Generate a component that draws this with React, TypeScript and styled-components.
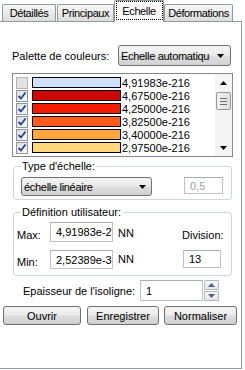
import React from 'react';
import styled, { createGlobalStyle } from 'styled-components';

const GlobalStyle = createGlobalStyle`
  html, body {
    margin: 0;
    padding: 0;
    background: #fff;
  }
  body {
    font-family: "Liberation Sans", Arial, sans-serif;
    font-size: 11px;
    color: #000;
  }
`;

const Window = styled.div`
  width: 245px;
  height: 370px;
  background: #fff;
  overflow: hidden;
`;

const TabStrip = styled.div`
  display: flex;
  align-items: flex-end;
  height: 21px;
  padding-left: 2px;
  position: relative;
  z-index: 1;
`;

const Tab = styled.div<{ $w: number; $active?: boolean; $gap?: number }>`
  box-sizing: border-box;
  width: ${({ $w }) => $w}px;
  height: ${({ $active }) => ($active ? 22 : 17)}px;
  margin-left: ${({ $gap }) => $gap ?? 0}px;
  margin-bottom: ${({ $active }) => ($active ? -1 : 0)}px;
  border: 1px solid #919b9c;
  border-bottom: none;
  border-radius: 2px 2px 0 0;
  background: ${({ $active }) => ($active ? '#fff' : 'linear-gradient(#f7f7f7, #dcdcdc)')};
  display: flex;
  justify-content: center;
  align-items: ${({ $active }) => ($active ? 'flex-start' : 'center')};
  white-space: nowrap;
  letter-spacing: -0.4px;
`;

const FocusLabel = styled.span`
  box-sizing: border-box;
  width: 47px;
  height: 19px;
  border: 1px dotted #000;
  display: flex;
  align-items: center;
  justify-content: center;
`;

const Panel = styled.div`
  box-sizing: border-box;
  width: 242px;
  height: 348px;
  border: 1px solid #919b9c;
  border-left: none;
  background: #fff;
  display: flex;
  flex-direction: column;
`;

const PaletteRow = styled.div`
  display: flex;
  align-items: center;
  height: 21px;
  margin-top: 23px;
  padding-left: 12px;
`;

const Label = styled.span<{ $w?: number }>`
  ${({ $w }) => ($w ? `width: ${$w}px;` : '')}
  white-space: nowrap;
  flex-shrink: 0;
`;

const Combo = styled.div<{ $w: number; $h: number }>`
  box-sizing: border-box;
  width: ${({ $w }) => $w}px;
  height: ${({ $h }) => $h}px;
  display: flex;
  align-items: center;
  border: 1px solid #707070;
  border-radius: 3px;
  background: linear-gradient(#f4f4f4, #ebebeb 48%, #dedede 52%, #d2d2d2);
  padding-left: 2px;
  overflow: hidden;
`;

const ComboText = styled.span`
  flex: 1;
  overflow: hidden;
  white-space: nowrap;
  letter-spacing: -0.3px;
`;

const ComboArrow = styled.span<{ $w: number }>`
  width: ${({ $w }) => $w}px;
  flex-shrink: 0;
  display: flex;
  justify-content: center;
  align-items: center;
`;

const ListBox = styled.div`
  box-sizing: border-box;
  width: 221px;
  height: 84px;
  margin: 7px 0 0 12px;
  border: 1px solid #828790;
  display: flex;
  overflow: hidden;
`;

const Rows = styled.div`
  flex: 1;
  padding: 2px 0 0 3px;
  display: flex;
  flex-direction: column;
  overflow: hidden;
`;

const Row = styled.div`
  height: 13px;
  display: flex;
  align-items: center;
  flex-shrink: 0;
`;

const Check = styled.span<{ $on: boolean }>`
  box-sizing: border-box;
  width: 12px;
  height: 12px;
  border: 1px solid ${({ $on }) => ($on ? '#8c95a6' : '#b4b4b4')};
  background: ${({ $on }) => ($on ? 'linear-gradient(135deg, #dcdcd7, #fafafa)' : '#e3e3e3')};
  display: flex;
  align-items: center;
  justify-content: center;
  flex-shrink: 0;
`;

const Swatch = styled.span<{ $c: string }>`
  box-sizing: border-box;
  width: 89px;
  height: 11px;
  margin-left: 4px;
  border: 1px solid #000;
  background: ${({ $c }) => $c};
  flex-shrink: 0;
`;

const Value = styled.span`
  margin-left: 1px;
  white-space: nowrap;
`;

const ScrollBar = styled.div`
  width: 17px;
  flex-shrink: 0;
  background: #f4f4f4;
  display: flex;
  flex-direction: column;
  align-items: center;
`;

const ScrollArrow = styled.div`
  width: 17px;
  height: 17px;
  display: flex;
  align-items: center;
  justify-content: center;
`;

const Thumb = styled.div`
  box-sizing: border-box;
  width: 15px;
  height: 18px;
  margin-top: 1px;
  border: 1px solid #979797;
  border-radius: 2px;
  background: linear-gradient(90deg, #f2f2f2, #e0e0e0);
  display: flex;
  flex-direction: column;
  align-items: center;
  justify-content: center;
  gap: 2px;
`;

const Grip = styled.span`
  width: 7px;
  height: 1px;
  background: #6f6f6f;
`;

const Spacer = styled.div`
  flex: 1;
`;

const GroupBox = styled.fieldset<{ $top: number; $pl: number; $pt: number; $pb: number }>`
  box-sizing: border-box;
  width: 219px;
  margin: ${({ $top }) => $top}px 0 0 13px;
  padding: ${({ $pt }) => $pt}px 0 ${({ $pb }) => $pb}px ${({ $pl }) => $pl}px;
  border: 1px solid #d0d7e2;
  border-radius: 3px;
  min-width: 0;
`;

const Legend = styled.legend<{ $ml: number }>`
  margin-left: ${({ $ml }) => $ml}px;
  padding: 0 2px 0 1px;
  line-height: 13px;
`;

const ScaleRow = styled.div`
  display: flex;
  align-items: flex-start;
`;

const TextBox = styled.input<{ $w: number; $h: number; $muted?: boolean; $ml?: number }>`
  box-sizing: border-box;
  width: ${({ $w }) => $w}px;
  height: ${({ $h }) => $h}px;
  margin: 0 0 0 ${({ $ml }) => $ml ?? 0}px;
  padding: 0 0 0 5px;
  border: 1px solid #bfc2c7;
  border-top-color: #a8abb0;
  font: inherit;
  color: ${({ $muted }) => ($muted ? '#a0a0a0' : '#000')};
  background: #fff;
  outline: none;
  flex-shrink: 0;
`;

const UserGrid = styled.div`
  display: grid;
  grid-template-columns: 33px 63px 69px 45px;
  grid-template-rows: 20px 19px;
  row-gap: 8px;
`;

const GridLabel = styled.span<{ $pb?: number; $pl?: number }>`
  align-self: end;
  line-height: 13px;
  padding-bottom: ${({ $pb }) => $pb ?? 0}px;
  padding-left: ${({ $pl }) => $pl ?? 0}px;
  white-space: nowrap;
`;

const ThicknessRow = styled.div`
  display: flex;
  align-items: center;
  margin-top: 4px;
  padding-left: 23px;
  height: 21px;
`;

const Spinner = styled.div`
  display: flex;
  flex-direction: column;
  gap: 1px;
  margin-left: 1px;
  height: 21px;
`;

const SpinButton = styled.div`
  box-sizing: border-box;
  width: 15px;
  height: 10px;
  border: 1px solid #b4b8be;
  border-radius: 1px;
  background: linear-gradient(#f7f7f7, #e4e6ea);
  display: flex;
  align-items: center;
  justify-content: center;
`;

const ButtonRow = styled.div`
  display: flex;
  margin-top: 5px;
  padding-left: 3px;
`;

const Button = styled.button<{ $w: number; $gap?: number }>`
  box-sizing: border-box;
  width: ${({ $w }) => $w}px;
  height: 19px;
  margin: 0 0 0 ${({ $gap }) => $gap ?? 0}px;
  padding: 0;
  border: 1px solid #707070;
  border-radius: 3px;
  background: linear-gradient(#f4f4f4, #ebebeb 48%, #dddddd 52%, #cfcfcf);
  font: inherit;
  color: #000;
`;

const DownArrow = ({ color = '#000' }: { color?: string }) => (
  <svg width="7" height="4" viewBox="0 0 7 4">
    <polygon points="0,0 7,0 3.5,4" fill={color} />
  </svg>
);

const UpArrow = ({ color = '#000' }: { color?: string }) => (
  <svg width="7" height="4" viewBox="0 0 7 4">
    <polygon points="0,4 7,4 3.5,0" fill={color} />
  </svg>
);

const CheckMark = () => (
  <svg width="10" height="10" viewBox="0 0 10 10">
    <polyline points="1.5,5 4,7.5 8.5,1.5" fill="none" stroke="#2a3f9c" strokeWidth="1.8" />
  </svg>
);

const levels = [
  { color: '#cfe2fd', value: '4,91983e-216', on: false },
  { color: '#cc0800', value: '4,67500e-216', on: true },
  { color: '#f21d00', value: '4,25000e-216', on: true },
  { color: '#ff5b1c', value: '3,82500e-216', on: true },
  { color: '#ffa73d', value: '3,40000e-216', on: true },
  { color: '#ffd77c', value: '2,97500e-216', on: true },
];

export default function App() {
  return (
    <Window>
      <GlobalStyle />
      <TabStrip>
        <Tab $w={54}>Détaillés</Tab>
        <Tab $w={57} $gap={1}>Principaux</Tab>
        <Tab $w={50} $active>
          <FocusLabel>Echelle</FocusLabel>
        </Tab>
        <Tab $w={69}>Déformations</Tab>
      </TabStrip>

      <Panel>
        <PaletteRow>
          <Label $w={106}>Palette de couleurs:</Label>
          <Combo $w={113} $h={21}>
            <ComboText>Echelle automatique</ComboText>
            <ComboArrow $w={20}>
              <DownArrow />
            </ComboArrow>
          </Combo>
        </PaletteRow>

        <ListBox>
          <Rows>
            {levels.map((l) => (
              <Row key={l.value}>
                <Check $on={l.on}>{l.on && <CheckMark />}</Check>
                <Swatch $c={l.color} />
                <Value>{l.value}</Value>
              </Row>
            ))}
          </Rows>
          <ScrollBar>
            <ScrollArrow>
              <UpArrow />
            </ScrollArrow>
            <Thumb>
              <Grip />
              <Grip />
              <Grip />
            </Thumb>
            <Spacer />
            <ScrollArrow>
              <DownArrow />
            </ScrollArrow>
          </ScrollBar>
        </ListBox>

        <GroupBox $top={3} $pl={7} $pt={4} $pb={3}>
          <Legend $ml={0}>Type d'échelle:</Legend>
          <ScaleRow>
            <Combo $w={131} $h={19}>
              <ComboText>échelle linéaire</ComboText>
              <ComboArrow $w={18}>
                <DownArrow />
              </ComboArrow>
            </Combo>
            <TextBox $w={39} $h={17} $ml={32} $muted readOnly value="0,5" />
          </ScaleRow>
        </GroupBox>

        <GroupBox $top={6} $pl={3} $pt={3} $pb={6}>
          <Legend $ml={4}>Définition utilisateur:</Legend>
          <UserGrid>
            <GridLabel>Max:</GridLabel>
            <TextBox $w={63} $h={20} readOnly value="4,91983e-216" />
            <GridLabel $pb={2} $pl={5}>NN</GridLabel>
            <GridLabel>Division:</GridLabel>
            <GridLabel>Min:</GridLabel>
            <TextBox $w={63} $h={19} readOnly value="2,52389e-316" />
            <GridLabel $pb={3} $pl={5}>NN</GridLabel>
            <TextBox $w={38} $h={18} $ml={1} readOnly value="13" />
          </UserGrid>
        </GroupBox>

        <ThicknessRow>
          <Label $w={117}>Epaisseur de l'isoligne:</Label>
          <TextBox $w={63} $h={21} readOnly value="1" />
          <Spinner>
            <SpinButton>
              <UpArrow color="#4a5f8a" />
            </SpinButton>
            <SpinButton>
              <DownArrow color="#4a5f8a" />
            </SpinButton>
          </Spinner>
        </ThicknessRow>

        <ButtonRow>
          <Button $w={78}>Ouvrir</Button>
          <Button $w={72} $gap={6}>Enregistrer</Button>
          <Button $w={73} $gap={5}>Normaliser</Button>
        </ButtonRow>
      </Panel>
    </Window>
  );
}
